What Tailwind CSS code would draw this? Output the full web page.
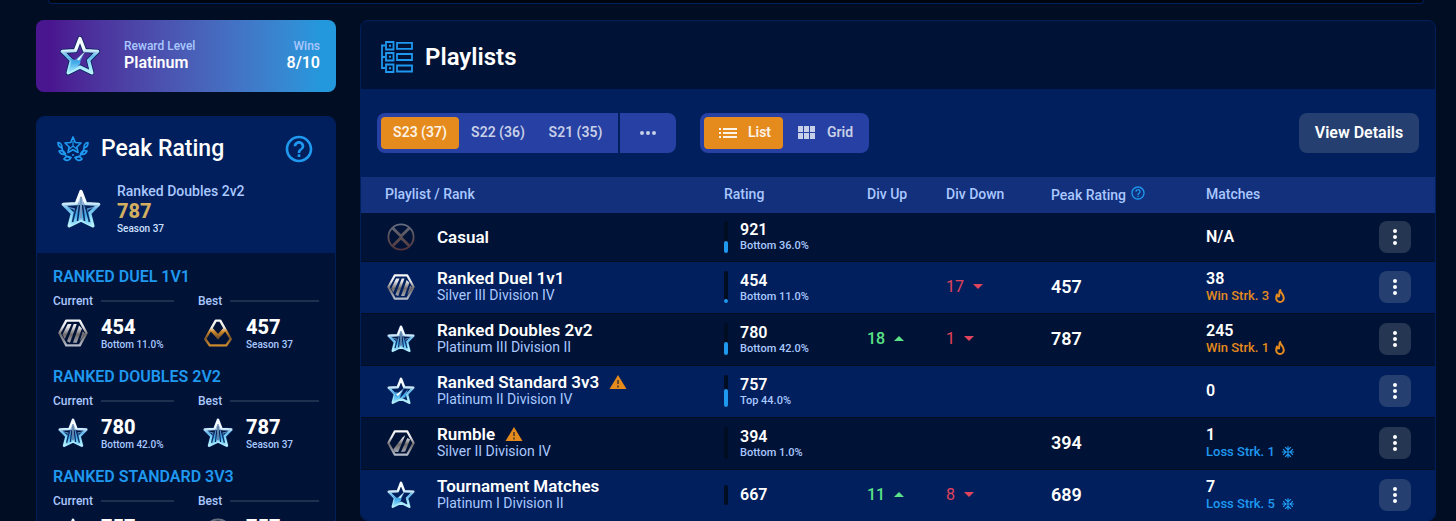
<!DOCTYPE html>
<html lang="en">
<head>
    <meta charset="UTF-8">
    <meta name="viewport" content="width=device-width, initial-scale=1.0">
    <title>Playlists</title>
    <script src="https://cdn.jsdelivr.net/npm/@tailwindcss/browser@4"></script>
</head>
<body class="h-screen overflow-hidden bg-[#000d22] font-['Roboto',sans-serif] text-white">
    <!-- Icon sprite -->
    <svg class="absolute h-0 w-0" aria-hidden="true">
        <defs>
            <linearGradient id="ice" x1="0" y1="0" x2="0" y2="40" gradientUnits="userSpaceOnUse">
                <stop offset="0" stop-color="#ffffff"/>
                <stop offset=".32" stop-color="#f2fbff"/>
                <stop offset=".5" stop-color="#63b9ec"/>
                <stop offset=".75" stop-color="#9fe6fb"/>
                <stop offset="1" stop-color="#c4f6ff"/>
            </linearGradient>
            <linearGradient id="blade" x1="0" y1="8" x2="0" y2="38" gradientUnits="userSpaceOnUse">
                <stop offset="0" stop-color="#d8e8fa"/>
                <stop offset=".35" stop-color="#5d90c4"/>
                <stop offset=".6" stop-color="#3fa9ea"/>
                <stop offset="1" stop-color="#b4f3ff"/>
            </linearGradient>
            <linearGradient id="steel" x1="0" y1="0" x2="0" y2="40" gradientUnits="userSpaceOnUse">
                <stop offset="0" stop-color="#ffffff"/>
                <stop offset=".3" stop-color="#e3e3e8"/>
                <stop offset=".55" stop-color="#6f6a6c"/>
                <stop offset="1" stop-color="#c3cbdc"/>
            </linearGradient>
            <linearGradient id="bronze" x1="0" y1="0" x2="0" y2="40" gradientUnits="userSpaceOnUse">
                <stop offset="0" stop-color="#ffffff"/>
                <stop offset=".32" stop-color="#efe9e0"/>
                <stop offset=".45" stop-color="#d08a2a"/>
                <stop offset=".65" stop-color="#7a5428"/>
                <stop offset="1" stop-color="#e59a30"/>
            </linearGradient>
            <linearGradient id="rust" x1="0" y1="0" x2="0" y2="40" gradientUnits="userSpaceOnUse">
                <stop offset="0" stop-color="#667084"/>
                <stop offset=".6" stop-color="#5a4a50"/>
                <stop offset="1" stop-color="#54303a"/>
            </linearGradient>
        </defs>
        <symbol id="star" viewBox="0 0 40 40">
            <path d="M20 2.5 24.6 14.6 37.6 15.4 28.6 24.4 31.8 36.8 20 31 8.2 36.8 11.4 24.4 2.4 15.4 15.4 14.6Z" fill="none" stroke="#08265e" stroke-width="5" stroke-linejoin="round"/>
            <path d="M20 2.5 24.6 14.6 37.6 15.4 28.6 24.4 31.8 36.8 20 31 8.2 36.8 11.4 24.4 2.4 15.4 15.4 14.6Z" fill="none" stroke="url(#ice)" stroke-width="3.4" stroke-linejoin="round"/>
        </symbol>
        <symbol id="plat1" viewBox="0 0 40 40">
            <use href="#star"/>
            <path d="M8 37 11.5 25 8.5 22 15 24 25 15.5 20.5 25 20 28 15.5 32.5Z" fill="url(#blade)"/>
            <path d="M25 15.5 17 23.5 19 24.5Z" fill="#e6f6ff"/>
        </symbol>
        <symbol id="plat2" viewBox="0 0 40 40">
            <use href="#star"/>
            <path d="M8 37 11.5 25 8 21 16 22.5 25 15 20.5 24 18 31Z" fill="url(#blade)"/>
            <path d="M18 31.5 30 17 26 29Z" fill="url(#blade)"/>
            <path d="M13 25 22 19 16 27Z" fill="#ffffff"/>
        </symbol>
        <symbol id="plat3" viewBox="0 0 40 40">
            <use href="#star"/>
            <path d="M4 17 13 21 9 37 14 32 16.5 20ZM36 17 27 21 31 37 26 32 23.5 20Z" fill="url(#blade)"/>
            <path d="M17.5 13 11 37 19 31V8ZM22.5 13 29 37 21 31V8Z" fill="url(#blade)"/>
            <path d="M15.5 17 11.500 33M24.5 17 28.500 33M18.500 16 16.500 32M21.500 16 23.500 32" stroke="#0b2a60" stroke-width="1.600"/>
            <path d="M20 9V31" stroke="#8fbbe0" stroke-width="1.600"/>
        </symbol>
        <symbol id="hex" viewBox="0 0 40 40">
            <path d="M11 3.500H29L38 20 29 36.500H11L2 20Z" fill="none" stroke="url(#steel)" stroke-width="3.200" stroke-linejoin="round"/>
        </symbol>
        <symbol id="silver2" viewBox="0 0 40 40">
            <use href="#hex"/>
            <path d="M9 29 22 12 26 9 16 33H11ZM20 33 29 13 33 15 26 32Z" fill="url(#steel)"/>
        </symbol>
        <symbol id="silver3" viewBox="0 0 40 40">
            <use href="#hex"/>
            <path d="M6 22 13 8H18L9 28ZM12 31 21 8H25L16 33ZM20 33 28 10 32 14 25 33ZM29 31 33 18 36 21Z" fill="url(#steel)"/>
        </symbol>
        <symbol id="bronze1" viewBox="0 0 40 40">
            <path d="M17 3.500H23L37 28 31 36.500H9L3 28Z" fill="none" stroke="url(#bronze)" stroke-width="3.200" stroke-linejoin="round"/>
            <path d="M11 15 20 25 29 15" fill="none" stroke="url(#bronze)" stroke-width="5"/>
        </symbol>
        <symbol id="unranked" viewBox="0 0 40 40">
            <g fill="none" stroke="url(#rust)">
                <circle cx="20" cy="20" r="18" stroke-width="2.600"/>
                <path d="M8 7 20 19 32 7M8 33 20 21 32 33" stroke-width="4"/>
            </g>
        </symbol>
        <symbol id="help" viewBox="0 0 24 24">
            <path d="M11 18h2v-2h-2v2zm1-16C6.480 2 2 6.480 2 12s4.480 10 10 10 10-4.480 10-10S17.520 2 12 2zm0 18c-4.410 0-8-3.590-8-8s3.590-8 8-8 8 3.590 8 8-3.590 8-8 8zm0-14c-2.210 0-4 1.790-4 4h2c0-1.100.9-2 2-2s2 .9 2 2c0 2-3 1.750-3 5h2c0-2.250 3-2.500 3-5 0-2.210-1.790-4-4-4z" fill="currentColor"/>
        </symbol>
        <symbol id="dots" viewBox="0 0 24 24">
            <path d="M12 8a2 2 0 1 0 0-4 2 2 0 0 0 0 4zm0 6a2 2 0 1 0 0-4 2 2 0 0 0 0 4zm0 6a2 2 0 1 0 0-4 2 2 0 0 0 0 4z" fill="currentColor"/>
        </symbol>
        <symbol id="warn" viewBox="0 0 18 16">
            <path d="M9 1 17.500 15H.5Z" fill="#e58a1c"/>
            <path d="M9 6v4M9 11.500v2" stroke="#6b4a26" stroke-width="2"/>
        </symbol>
        <symbol id="flame" viewBox="0 0 10 14">
            <path d="M5.200 1C5 3.500 8.800 5 8.800 9A3.800 4 0 0 1 1.200 9C1.200 7.500 1.500 6.500 2 5.500 2.500 7 3.400 7.600 4 7.500 4.600 5.500 3.800 3 5.200 1Z" fill="none" stroke="currentColor" stroke-width="2" stroke-linejoin="round"/>
        </symbol>
        <symbol id="snow" viewBox="0 0 24 24">
            <path d="M22 11h-4.170l3.240-3.240-1.410-1.420L15 11h-2V9l4.660-4.660-1.420-1.410L13 6.170V2h-2v4.170L7.760 2.930 6.340 4.340 11 9v2H9L4.340 6.340 2.930 7.760 6.170 11H2v2h4.170l-3.240 3.240 1.410 1.420L9 13h2v2l-4.660 4.660 1.420 1.410L11 17.830V22h2v-4.170l3.240 3.240 1.420-1.410L13 15v-2h2l4.660 4.660 1.410-1.420L17.830 13H22z" fill="currentColor"/>
        </symbol>
    </svg>

    <div class="pl-9 pr-5">
        <!-- Bottom edge of the profile bar -->
        <div class="mx-3 mb-4 h-1 rounded-b-md border-x border-b border-[#001f5c] bg-[#00060f]"></div>

        <div class="flex items-start gap-6">
            <!-- Sidebar -->
            <aside class="w-[300px] shrink-0">
                <section class="mb-6 flex h-18 items-center rounded-lg bg-linear-to-r from-[#4a1690] from-5% to-[#2498dc] to-95% pl-6 pr-4">
                    <svg class="size-10"><use href="#plat1"/></svg>
                    <div class="ml-6 flex-1 pb-0.5">
                        <p class="text-xs font-medium leading-4 text-[#aac8ff]">Reward Level</p>
                        <p class="font-semibold leading-[18px]">Platinum</p>
                    </div>
                    <div class="pb-0.5 text-right">
                        <p class="text-xs font-medium leading-4 text-[#aac8ff]">Wins</p>
                        <p class="font-semibold leading-[18px]">8/10</p>
                    </div>
                </section>

                <section class="overflow-hidden rounded-lg border border-[#001f5c] bg-[#001336]">
                    <header class="bg-[#001f5c] px-5 pb-4 pt-4">
                        <div class="flex h-8 items-center">
                            <svg class="h-7 w-8 text-[#1f98f0]" viewBox="0 0 32 28" fill="none" stroke="currentColor" stroke-width="1.700" stroke-linejoin="round">
                                <path d="M16 2 18.300 7.500 24 8 19.800 12 21 17.500 16 14.800 11 17.500 12.200 12 8 8 13.700 7.500Z"/>
                                <path d="M16 6V11M16 11 12.500 14M16 11 19.500 14" stroke-width="1.200"/>
                                <path d="M1 7.500Q5 8 5 13 1 12 1 7.500ZM31 7.500Q27 8 27 13 31 12 31 7.500ZM2 16Q6.500 14.500 8.500 19 4 20.500 2 16ZM30 16Q25.500 14.500 23.500 19 28 20.500 30 16ZM7 24Q9 20 14 22.500 11 27.500 7 24ZM25 24Q23 20 18 22.500 21 27.500 25 24Z"/>
                                <path d="M5 13Q6 21 13 22.500M27 13Q26 21 19 22.500"/>
                                <path d="M15 20H17"/>
                            </svg>
                            <h2 class="ml-3 flex-1 text-[23px] font-medium leading-8">Peak Rating</h2>
                            <button type="button" aria-label="About peak rating" class="text-[#1f98f0]"><svg class="size-8"><use href="#help"/></svg></button>
                        </div>
                        <div class="mt-4 flex items-center pl-1">
                            <svg class="size-10"><use href="#plat3"/></svg>
                            <div class="ml-4">
                                <p class="text-sm font-medium leading-5 text-[#aac8ff]">Ranked Doubles 2v2</p>
                                <p class="text-xl font-extrabold leading-5 text-[#d2ae61]">787</p>
                                <p class="text-[10px] font-medium leading-4 text-[#cfe0ff]">Season 37</p>
                            </div>
                        </div>
                    </header>

                    <div class="px-4 py-3">
                        <div class="mb-3">
                            <h3 class="font-semibold leading-6 text-[#1f98f0]">RANKED DUEL 1V1</h3>
                            <div class="grid grid-cols-2 gap-x-6">
                                <div>
                                    <p class="flex h-6 items-center gap-2 text-xs font-medium text-[#aac8ff]">Current<span class="h-0.5 flex-1 bg-[#1f304e]"></span></p>
                                    <div class="flex h-10 items-center">
                                        <svg class="mx-[5px] size-[30px]"><use href="#silver3"/></svg>
                                        <div class="ml-2 pt-1">
                                            <p class="text-xl font-extrabold leading-5">454</p>
                                            <p class="text-[10px] font-medium leading-4 text-[#aac8ff]">Bottom 11.0%</p>
                                        </div>
                                    </div>
                                </div>
                                <div>
                                    <p class="flex h-6 items-center gap-2 text-xs font-medium text-[#aac8ff]">Best<span class="h-0.5 flex-1 bg-[#1f304e]"></span></p>
                                    <div class="flex h-10 items-center">
                                        <svg class="mx-[5px] size-[30px]"><use href="#bronze1"/></svg>
                                        <div class="ml-2 pt-1">
                                            <p class="text-xl font-extrabold leading-5">457</p>
                                            <p class="text-[10px] font-medium leading-4 text-[#aac8ff]">Season 37</p>
                                        </div>
                                    </div>
                                </div>
                            </div>
                        </div>

                        <div class="mb-3">
                            <h3 class="font-semibold leading-6 text-[#1f98f0]">RANKED DOUBLES 2V2</h3>
                            <div class="grid grid-cols-2 gap-x-6">
                                <div>
                                    <p class="flex h-6 items-center gap-2 text-xs font-medium text-[#aac8ff]">Current<span class="h-0.5 flex-1 bg-[#1f304e]"></span></p>
                                    <div class="flex h-10 items-center">
                                        <svg class="mx-[5px] size-[30px]"><use href="#plat3"/></svg>
                                        <div class="ml-2 pt-1">
                                            <p class="text-xl font-extrabold leading-5">780</p>
                                            <p class="text-[10px] font-medium leading-4 text-[#aac8ff]">Bottom 42.0%</p>
                                        </div>
                                    </div>
                                </div>
                                <div>
                                    <p class="flex h-6 items-center gap-2 text-xs font-medium text-[#aac8ff]">Best<span class="h-0.5 flex-1 bg-[#1f304e]"></span></p>
                                    <div class="flex h-10 items-center">
                                        <svg class="mx-[5px] size-[30px]"><use href="#plat3"/></svg>
                                        <div class="ml-2 pt-1">
                                            <p class="text-xl font-extrabold leading-5">787</p>
                                            <p class="text-[10px] font-medium leading-4 text-[#aac8ff]">Season 37</p>
                                        </div>
                                    </div>
                                </div>
                            </div>
                        </div>

                        <div class="mb-3">
                            <h3 class="font-semibold leading-6 text-[#1f98f0]">RANKED STANDARD 3V3</h3>
                            <div class="grid grid-cols-2 gap-x-6">
                                <div>
                                    <p class="flex h-6 items-center gap-2 text-xs font-medium text-[#aac8ff]">Current<span class="h-0.5 flex-1 bg-[#1f304e]"></span></p>
                                    <div class="flex h-10 items-center">
                                        <svg class="mx-[5px] size-[30px]"><use href="#plat2"/></svg>
                                        <p class="ml-2 pb-3 text-xl font-extrabold leading-5">757</p>
                                    </div>
                                </div>
                                <div>
                                    <p class="flex h-6 items-center gap-2 text-xs font-medium text-[#aac8ff]">Best<span class="h-0.5 flex-1 bg-[#1f304e]"></span></p>
                                    <div class="flex h-10 items-center">
                                        <svg class="mx-[5px] size-[30px]"><use href="#unranked"/></svg>
                                        <p class="ml-2 pb-3 text-xl font-extrabold leading-5">757</p>
                                    </div>
                                </div>
                            </div>
                        </div>
                    </div>
                </section>
            </aside>

            <!-- Playlists -->
            <main class="min-w-0 flex-1 overflow-hidden rounded-lg border border-[#001f5c] bg-[#001336]">
                <header class="flex h-17 items-center gap-3 px-5 pt-1">
                    <svg class="size-8 text-[#1f98f0]" viewBox="0 0 32 32" fill="none" stroke="currentColor">
                        <path d="M4 4.500H1V27H4M1 16H4" stroke-width="1.800"/>
                        <path d="M5 1h7.500v7.500H5zM5 12h7.500v7.500H5zM5 23.500h7.500v7.500H5zM16 1.800h15v6H16zM16 13h15v6H16zM16 24.500h15v6H16z" stroke-width="1.800"/>
                        <path d="M8 4.800h2M8 15.800h2M8 27.200h2" stroke-width="2"/>
                    </svg>
                    <h1 class="text-2xl font-semibold leading-8">Playlists</h1>
                </header>

                <div class="flex items-center gap-6 bg-[#001f5c] px-4 py-6">
                    <div class="flex h-10 gap-0.5 text-sm font-semibold text-white/75">
                        <div class="flex rounded-l-lg bg-[#2641a3] p-1">
                            <button type="button" class="w-[78px] rounded-sm bg-[#e58a1c] pb-0.5 text-white/90">S23 (37)</button>
                            <button type="button" class="w-[78px] pb-0.5">S22 (36)</button>
                            <button type="button" class="w-[77px] pb-0.5">S21 (35)</button>
                        </div>
                        <button type="button" aria-label="More seasons" class="flex w-14 items-center justify-center rounded-r-lg bg-[#2641a3]">
                            <svg class="size-6 rotate-90"><use href="#dots"/></svg>
                        </button>
                    </div>
                    <div class="flex h-10 rounded-lg bg-[#2641a3] p-1 text-sm font-semibold text-white/75">
                        <button type="button" class="flex w-[79px] items-center justify-center gap-2.5 rounded-sm bg-[#e58a1c] pl-0.5 text-white/90">
                            <svg class="h-3 w-5" viewBox="0 0 20 12" fill="currentColor"><path d="M1 1h2v2H1zM1 5h2v2H1zM1 9h2v2H1zM5 1h14v2H5zM5 5h14v2H5zM5 9h14v2H5z"/></svg>
                            <span class="pb-0.5">List</span>
                        </button>
                        <button type="button" class="flex w-[82px] items-center justify-center gap-2.5 pl-0.5">
                            <svg class="h-3.5 w-5" viewBox="0 0 20 14" fill="currentColor"><path d="M1 0h5v6H1zM7 0h5v6H7zM13 0h5v6H13zM1 7h5v6H1zM7 7h5v6H7zM13 7h5v6H13z"/></svg>
                            <span class="pb-0.5">Grid</span>
                        </button>
                    </div>
                    <button type="button" class="ml-auto h-10 w-30 rounded-lg bg-[#253f70] font-semibold">View Details</button>
                </div>

                <table class="w-full table-fixed text-left">
                    <colgroup>
                        <col>
                        <col class="w-[143px]">
                        <col class="w-[79px]">
                        <col class="w-[105px]">
                        <col class="w-[155px]">
                        <col class="w-[162px]">
                        <col class="w-[79px]">
                    </colgroup>
                    <thead class="bg-[#12307c] text-sm text-[#aac8ff]">
                        <tr class="h-9">
                            <th class="pb-0.5 pl-6 font-medium">Playlist / Rank</th>
                            <th class="pb-0.5 pl-3 font-medium">Rating</th>
                            <th class="pb-0.5 pl-3 font-medium">Div Up</th>
                            <th class="pb-0.5 pl-3 font-medium">Div Down</th>
                            <th class="pl-3 font-medium"><span class="flex items-end gap-1">Peak Rating <svg class="mb-1 size-4 text-[#1f98f0]"><use href="#help"/></svg></span></th>
                            <th class="pb-0.5 pl-3 font-medium">Matches</th>
                            <th></th>
                        </tr>
                    </thead>
                    <tbody>
                        <tr class="h-12 border-b border-[#000d22]">
                            <td class="pl-6">
                                <div class="flex items-center">
                                    <svg class="mx-0.5 size-7"><use href="#unranked"/></svg>
                                    <p class="ml-5 text-[17px] font-semibold leading-4">Casual</p>
                                </div>
                            </td>
                            <td class="pl-3">
                                <div class="flex items-center gap-3">
                                    <div class="flex h-8 w-1 items-end rounded-full bg-[#000d22]"><div class="w-full rounded-full bg-[#1f98f0]" style="height: 36%"></div></div>
                                    <div class="pt-0.5">
                                        <p class="font-semibold leading-4">921</p>
                                        <p class="text-[11px] font-medium leading-4 text-[#aac8ff]">Bottom 36.0%</p>
                                    </div>
                                </div>
                            </td>
                            <td></td>
                            <td></td>
                            <td></td>
                            <td class="pl-3 font-semibold">N/A</td>
                            <td><button type="button" aria-label="Casual options" class="ml-auto mr-6 flex size-8 items-center justify-center rounded-lg bg-[#253652]"><svg class="size-6"><use href="#dots"/></svg></button></td>
                        </tr>
                        <tr class="h-[52px] border-b border-[#000d22] bg-[#001f5c]">
                            <td class="pl-6">
                                <div class="flex items-center">
                                    <svg class="mx-0.5 size-7"><use href="#silver3"/></svg>
                                    <div class="ml-5">
                                        <p class="text-[17px] font-semibold leading-4">Ranked Duel 1v1</p>
                                        <p class="text-sm leading-[18px] text-[#aac8ff]">Silver III Division IV</p>
                                    </div>
                                </div>
                            </td>
                            <td class="pl-3">
                                <div class="flex items-center gap-3">
                                    <div class="flex h-8 w-1 items-end rounded-full bg-[#000d22]"><div class="w-full rounded-full bg-[#1f98f0]" style="height: 11%"></div></div>
                                    <div class="pt-1">
                                        <p class="font-semibold leading-4">454</p>
                                        <p class="text-[11px] font-medium leading-4 text-[#aac8ff]">Bottom 11.0%</p>
                                    </div>
                                </div>
                            </td>
                            <td></td>
                            <td class="pl-3 text-[#e0435c]"><span class="flex items-center gap-2">17<svg class="h-1.5 w-3" viewBox="0 0 12 6" fill="currentColor"><path d="M1 0h10L6 5z"/></svg></span></td>
                            <td class="pl-3 text-lg font-semibold">457</td>
                            <td class="pl-3 pt-0.5">
                                <p class="font-semibold leading-4">38</p>
                                <p class="flex items-center gap-1.5 text-[13px] font-medium leading-[18px] text-[#e58a1c]">Win Strk. 3 <svg class="h-3.5 w-2.5"><use href="#flame"/></svg></p>
                            </td>
                            <td><button type="button" aria-label="Ranked Duel options" class="ml-auto mr-6 flex size-8 items-center justify-center rounded-lg bg-[#253f70]"><svg class="size-6"><use href="#dots"/></svg></button></td>
                        </tr>
                        <tr class="h-[52px] border-b border-[#000d22]">
                            <td class="pl-6">
                                <div class="flex items-center">
                                    <svg class="mx-0.5 size-7"><use href="#plat3"/></svg>
                                    <div class="ml-5">
                                        <p class="text-[17px] font-semibold leading-4">Ranked Doubles 2v2</p>
                                        <p class="text-sm leading-[18px] text-[#aac8ff]">Platinum III Division II</p>
                                    </div>
                                </div>
                            </td>
                            <td class="pl-3">
                                <div class="flex items-center gap-3">
                                    <div class="flex h-8 w-1 items-end rounded-full bg-[#000d22]"><div class="w-full rounded-full bg-[#1f98f0]" style="height: 42%"></div></div>
                                    <div class="pt-1">
                                        <p class="font-semibold leading-4">780</p>
                                        <p class="text-[11px] font-medium leading-4 text-[#aac8ff]">Bottom 42.0%</p>
                                    </div>
                                </div>
                            </td>
                            <td class="pl-3 font-medium text-[#5be387]"><span class="flex items-center gap-2">18<svg class="h-1.5 w-3" viewBox="0 0 12 6" fill="currentColor"><path d="M1 5h10L6 0z"/></svg></span></td>
                            <td class="pl-3 text-[#e0435c]"><span class="flex items-center gap-2">1<svg class="h-1.5 w-3" viewBox="0 0 12 6" fill="currentColor"><path d="M1 0h10L6 5z"/></svg></span></td>
                            <td class="pl-3 text-lg font-semibold">787</td>
                            <td class="pl-3 pt-0.5">
                                <p class="font-semibold leading-4">245</p>
                                <p class="flex items-center gap-1.5 text-[13px] font-medium leading-[18px] text-[#e58a1c]">Win Strk. 1 <svg class="h-3.5 w-2.5"><use href="#flame"/></svg></p>
                            </td>
                            <td><button type="button" aria-label="Ranked Doubles options" class="ml-auto mr-6 flex size-8 items-center justify-center rounded-lg bg-[#253652]"><svg class="size-6"><use href="#dots"/></svg></button></td>
                        </tr>
                        <tr class="h-[52px] border-b border-[#000d22] bg-[#001f5c]">
                            <td class="pl-6">
                                <div class="flex items-center">
                                    <svg class="mx-0.5 size-7"><use href="#plat2"/></svg>
                                    <div class="ml-5">
                                        <p class="flex items-center gap-2.5 text-[17px] font-semibold leading-4">Ranked Standard 3v3 <svg class="h-4 w-[18px]"><use href="#warn"/></svg></p>
                                        <p class="text-sm leading-[18px] text-[#aac8ff]">Platinum II Division IV</p>
                                    </div>
                                </div>
                            </td>
                            <td class="pl-3">
                                <div class="flex items-center gap-3">
                                    <div class="flex h-8 w-1 items-end rounded-full bg-[#000d22]"><div class="w-full rounded-full bg-[#1f98f0]" style="height: 56%"></div></div>
                                    <div class="pt-1">
                                        <p class="font-semibold leading-4">757</p>
                                        <p class="text-[11px] font-medium leading-4 text-[#aac8ff]">Top 44.0%</p>
                                    </div>
                                </div>
                            </td>
                            <td></td>
                            <td></td>
                            <td></td>
                            <td class="pl-3 font-semibold">0</td>
                            <td><button type="button" aria-label="Ranked Standard options" class="ml-auto mr-6 flex size-8 items-center justify-center rounded-lg bg-[#253f70]"><svg class="size-6"><use href="#dots"/></svg></button></td>
                        </tr>
                        <tr class="h-[52px] border-b border-[#000d22]">
                            <td class="pl-6">
                                <div class="flex items-center">
                                    <svg class="mx-0.5 size-7"><use href="#silver2"/></svg>
                                    <div class="ml-5">
                                        <p class="flex items-center gap-2.5 text-[17px] font-semibold leading-4">Rumble <svg class="h-4 w-[18px]"><use href="#warn"/></svg></p>
                                        <p class="text-sm leading-[18px] text-[#aac8ff]">Silver II Division IV</p>
                                    </div>
                                </div>
                            </td>
                            <td class="pl-3">
                                <div class="flex items-center gap-3">
                                    <div class="h-8 w-1 rounded-full bg-[#000d22]"></div>
                                    <div class="pt-1">
                                        <p class="font-semibold leading-4">394</p>
                                        <p class="text-[11px] font-medium leading-4 text-[#aac8ff]">Bottom 1.0%</p>
                                    </div>
                                </div>
                            </td>
                            <td></td>
                            <td></td>
                            <td class="pl-3 text-lg font-semibold">394</td>
                            <td class="pl-3 pt-0.5">
                                <p class="font-semibold leading-4">1</p>
                                <p class="flex items-center gap-1.5 text-[13px] font-medium leading-[18px] text-[#1f98f0]">Loss Strk. 1 <svg class="size-3.5"><use href="#snow"/></svg></p>
                            </td>
                            <td><button type="button" aria-label="Rumble options" class="ml-auto mr-6 flex size-8 items-center justify-center rounded-lg bg-[#253652]"><svg class="size-6"><use href="#dots"/></svg></button></td>
                        </tr>
                        <tr class="h-[51px] bg-[#001f5c]">
                            <td class="pl-6">
                                <div class="flex items-center">
                                    <svg class="mx-0.5 size-7"><use href="#plat1"/></svg>
                                    <div class="ml-5">
                                        <p class="text-[17px] font-semibold leading-4">Tournament Matches</p>
                                        <p class="text-sm leading-[18px] text-[#aac8ff]">Platinum I Division II</p>
                                    </div>
                                </div>
                            </td>
                            <td class="pl-3">
                                <div class="flex items-center gap-3">
                                    <div class="h-5 w-1 rounded-full bg-[#000d22]"></div>
                                    <p class="font-semibold leading-4">667</p>
                                </div>
                            </td>
                            <td class="pl-3 font-medium text-[#5be387]"><span class="flex items-center gap-2">11<svg class="h-1.5 w-3" viewBox="0 0 12 6" fill="currentColor"><path d="M1 5h10L6 0z"/></svg></span></td>
                            <td class="pl-3 text-[#e0435c]"><span class="flex items-center gap-2">8<svg class="h-1.5 w-3" viewBox="0 0 12 6" fill="currentColor"><path d="M1 0h10L6 5z"/></svg></span></td>
                            <td class="pl-3 text-lg font-semibold">689</td>
                            <td class="pl-3 pt-0.5">
                                <p class="font-semibold leading-4">7</p>
                                <p class="flex items-center gap-1.5 text-[13px] font-medium leading-[18px] text-[#1f98f0]">Loss Strk. 5 <svg class="size-3.5"><use href="#snow"/></svg></p>
                            </td>
                            <td><button type="button" aria-label="Tournament options" class="ml-auto mr-6 flex size-8 items-center justify-center rounded-lg bg-[#253f70]"><svg class="size-6"><use href="#dots"/></svg></button></td>
                        </tr>
                    </tbody>
                </table>
            </main>
        </div>
    </div>
</body>
</html>
